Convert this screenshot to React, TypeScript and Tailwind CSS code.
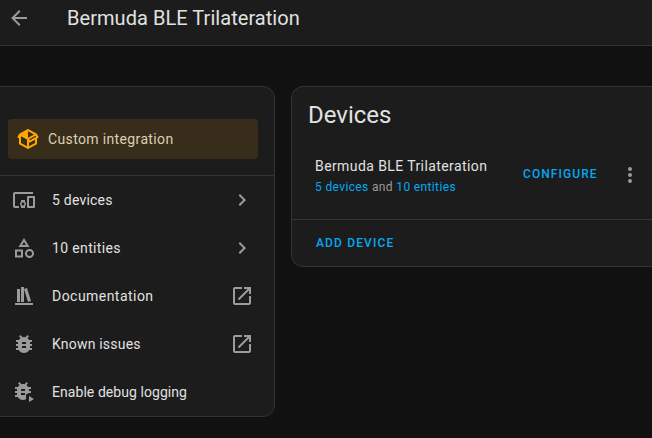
import React from "react";

const paths = {
  back: "M20,11V13H8L13.5,18.5L12.08,19.92L4.16,12L12.08,4.08L13.5,5.5L8,11H20Z",
  pkg: "M2,10.96C1.5,10.68 1.35,10.07 1.63,9.59L3.13,7C3.24,6.8 3.41,6.66 3.6,6.58L11.43,2.18C11.59,2.06 11.79,2 12,2C12.21,2 12.41,2.06 12.57,2.18L20.47,6.62C20.66,6.72 20.82,6.88 20.91,7.08L22.36,9.6C22.64,10.08 22.47,10.69 22,10.96L21,11.54V16.5C21,16.88 20.79,17.21 20.47,17.38L12.57,21.82C12.41,21.94 12.21,22 12,22C11.79,22 11.59,21.94 11.43,21.82L3.53,17.38C3.21,17.21 3,16.88 3,16.5V10.96C2.7,11.13 2.32,11.14 2,10.96M12,4.15V4.15L12,10.85V10.85L17.96,7.5L12,4.15M5,15.91L11,19.29V12.58L5,9.21V15.91M19,15.91V12.69L14,15.59C13.67,15.77 13.3,15.76 13,15.6V19.29L19,15.91M13.85,13.36L20.13,9.73L19.55,8.72L13.27,12.35L13.85,13.36Z",
  devices: "M3 6H21V4H3C1.9 4 1 4.9 1 6V18C1 19.1 1.9 20 3 20H7V18H3V6M13 12H9V13.78C8.39 14.33 8 15.11 8 16C8 16.89 8.39 17.67 9 18.22V20H13V18.22C13.61 17.67 14 16.88 14 16S13.61 14.33 13 13.78V12M11 17.5C10.17 17.5 9.5 16.83 9.5 16S10.17 14.5 11 14.5 12.5 15.17 12.5 16 11.83 17.5 11 17.5M22 8H16C15.5 8 15 8.5 15 9V19C15 19.5 15.5 20 16 20H22C22.5 20 23 19.5 23 19V9C23 8.5 22.5 8 22 8M21 18H17V10H21V18Z",
  shapes: "M11,13.5V21.5H3V13.5H11M9,15.5H5V19.5H9V15.5M12,2L17.5,11H6.5L12,2M12,5.86L10.08,9H13.92L12,5.86M17.5,13C20,13 22,15 22,17.5C22,20 20,22 17.5,22C15,22 13,20 13,17.5C13,15 15,13 17.5,13M17.5,15A2.5,2.5 0 0,0 15,17.5A2.5,2.5 0 0,0 17.5,20A2.5,2.5 0 0,0 20,17.5A2.5,2.5 0 0,0 17.5,15Z",
  books: "M9 3V18H12V3H9M12 5L16 18L19 17L15 4L12 5M5 5V18H8V5H5M3 19V21H21V19H3Z",
  bug: "M14,12H10V10H14M14,16H10V14H14M20,8H17.19C16.74,7.22 16.12,6.55 15.37,6.04L17,4.41L15.59,3L13.42,5.17C12.96,5.06 12.5,5 12,5C11.5,5 11.04,5.06 10.59,5.17L8.41,3L7,4.41L8.62,6.04C7.88,6.55 7.26,7.22 6.81,8H4V10H6.09C6.04,10.33 6,10.66 6,11V12H4V14H6V15C6,15.34 6.04,15.67 6.09,16H4V18H6.81C7.85,19.79 9.78,21 12,21C14.22,21 16.15,19.79 17.19,18H20V16H17.91C17.96,15.67 18,15.34 18,15V14H20V12H18V11C18,10.66 17.96,10.33 17.91,10H20V8Z",
  bugPlay: "M13 11H9V9H13V11M13 15H9V13H13V15M19 7H16.19C15.74 6.22 15.12 5.55 14.37 5.04L16 3.41L14.59 2L12.42 4.17C11.96 4.06 11.5 4 11 4S10.04 4.06 9.59 4.17L7.41 2L6 3.41L7.62 5.04C6.88 5.55 6.26 6.22 5.81 7H3V9H5.09C5.04 9.33 5 9.66 5 10V11H3V13H5V14C5 14.34 5.04 14.67 5.09 15H3V17H5.81C6.85 18.79 8.78 20 11 20C12.1 20 13.14 19.7 14 19.2V14.5L17 13H19V11H17V10C17 9.66 16.96 9.33 16.91 9H19V7M17 16V22L22 19L17 16Z",
  open: "M14,3V5H17.59L7.76,14.83L9.17,16.24L19,6.41V10H21V3M19,19H5V5H12V3H5C3.89,3 3,3.9 3,5V19A2,2 0 0,0 5,21H19A2,2 0 0,0 21,19V12H19V19Z",
  chevron: "M8.59,16.58L13.17,12L8.59,7.41L10,6L16,12L10,18L8.59,16.58Z",
  dots: "M12,16A2,2 0 0,1 14,18A2,2 0 0,1 12,20A2,2 0 0,1 10,18A2,2 0 0,1 12,16M12,10A2,2 0 0,1 14,12A2,2 0 0,1 12,14A2,2 0 0,1 10,12A2,2 0 0,1 12,10M12,4A2,2 0 0,1 14,6A2,2 0 0,1 12,8A2,2 0 0,1 10,6A2,2 0 0,1 12,4Z",
};

type IconName = keyof typeof paths;

function Icon({ name, className = "" }: { name: IconName; className?: string }) {
  return (
    <svg viewBox="0 0 24 24" className={`size-6 shrink-0 fill-current ${className}`}>
      <path d={paths[name]} />
    </svg>
  );
}

const rows: { icon: IconName; label: string; tracking: string; end?: IconName }[] = [
  { icon: "devices", label: "5 devices", tracking: "tracking-[0.22px]", end: "chevron" },
  { icon: "shapes", label: "10 entities", tracking: "tracking-[0.36px]", end: "chevron" },
  { icon: "books", label: "Documentation", tracking: "tracking-[0.46px]", end: "open" },
  { icon: "bug", label: "Known issues", tracking: "tracking-[0.2px]", end: "open" },
  { icon: "bugPlay", label: "Enable debug logging", tracking: "tracking-[0.06px]" },
];

export default function App() {
  return (
    <div className="h-[438px] w-[652px] overflow-hidden bg-[#111111] font-[Roboto,sans-serif] text-[#e1e1e1]">
      <header className="flex h-[46px] items-start border-b border-[#333333] bg-[#1c1c1c] pl-[7px] pt-1.5">
        <Icon name="back" className="text-[#9b9b9b]" />
        <h1 className="ml-9 text-xl leading-6 tracking-[0.05px]">Bermuda BLE Trilateration</h1>
      </header>
      <main className="flex items-start gap-4 pt-10">
        <section className="-ml-[11px] h-[331px] w-[286px] shrink-0 rounded-xl border border-[#333333] bg-[#1c1c1c] pl-2.5">
          <div className="ml-2 mt-8 flex h-10 w-[250px] items-center gap-2 rounded bg-[#382d1b] pl-2 text-sm tracking-[0.36px] text-[#dccfb5]">
            <Icon name="pkg" className="text-[#ffa600]" />
            Custom integration
          </div>
          <ul className="mt-4 border-t border-[#333333]">
            {rows.map((r) => (
              <li key={r.label} className="flex h-12 items-center pl-3 pr-5 text-sm">
                <Icon name={r.icon} className="text-[#9b9b9b]" />
                <span className={`ml-4 flex-1 ${r.tracking}`}>{r.label}</span>
                {r.end && <Icon name={r.end} className="text-[#9b9b9b]" />}
              </li>
            ))}
          </ul>
        </section>
        <section className="h-[181px] w-[400px] shrink-0 rounded-xl border border-[#333333] bg-[#1c1c1c]">
          <h2 className="pl-4 pt-3 text-2xl leading-8">Devices</h2>
          <div className="mt-[25px] flex h-16 items-start border-b border-[#333333] pl-[23px]">
            <div className="w-[208px]">
              <div className="text-sm leading-5 tracking-[0.41px]">Bermuda BLE Trilateration</div>
              <div className="mt-px text-xs leading-5 tracking-[0.36px] text-[#9b9b9b]">
                <span className="text-[#03a9f4]">5 devices</span> and <span className="text-[#03a9f4]">10 entities</span>
              </div>
            </div>
            <button className="mt-2 w-[95px] text-left text-xs font-medium leading-5 tracking-[1.07px] text-[#03a9f4]">CONFIGURE</button>
            <Icon name="dots" className="mt-[7px] text-[#9b9b9b]" />
          </div>
          <button className="ml-6 mt-[13px] text-xs font-medium leading-5 tracking-[1.15px] text-[#03a9f4]">ADD DEVICE</button>
        </section>
      </main>
    </div>
  );
}
